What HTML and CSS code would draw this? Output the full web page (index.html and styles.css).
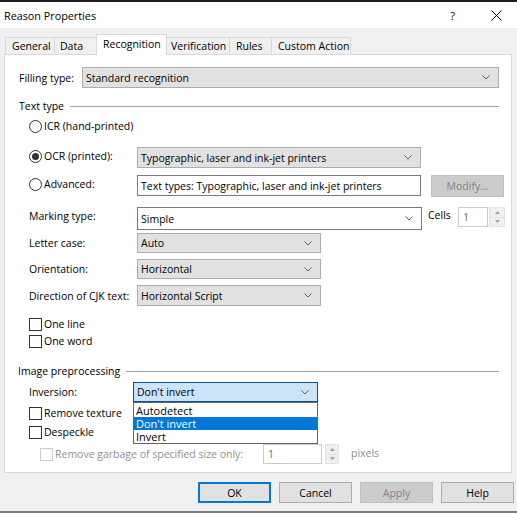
FILE: index.html
```html
<!DOCTYPE html>
<html>
<head>
<meta charset="utf-8">
<link rel="stylesheet" href="styles.css">
</head>
<body>
<div class="win">
  <div class="topstrip"></div>
  <div class="titlebar">
    <span class="title">Reason Properties</span>
    <span class="qmark">?</span>
    <svg class="close" width="11" height="11" viewBox="0 0 11 11"><path d="M0.5 0.5 L10.5 10.5 M10.5 0.5 L0.5 10.5" stroke="#000" stroke-width="1" fill="none"/></svg>
  </div>
  <div class="tabs">
    <div class="tab t-gen">General</div>
    <div class="tab t-data">Data</div>
    <div class="tab sel t-rec">Recognition</div>
    <div class="tab t-ver">Verification</div>
    <div class="tab t-rul">Rules</div>
    <div class="tab t-cus">Custom Action</div>
  </div>
  <div class="panel">
    <div class="row r-fill">
      <span class="lbl w-fill">Filling type:</span>
      <div class="combo grow"><span>Standard recognition</span><svg class="chev" width="8" height="5" viewBox="0 0 8 5"><polyline points="0.5,0.5 4,4 7.5,0.5" fill="none" stroke="#606060" stroke-width="1"/></svg></div>
    </div>
    <div class="row legend r-tt"><span>Text type</span><div class="gline"></div></div>
    <div class="row r-icr radrow">
      <span class="radio"></span><span>ICR (hand-printed)</span>
    </div>
    <div class="row r-ocr">
      <div class="radlbl"><span class="radio on"></span><span>OCR (printed):</span></div>
      <div class="combo w-ocr"><span>Typographic, laser and ink-jet printers</span><svg class="chev" width="8" height="5" viewBox="0 0 8 5"><polyline points="0.5,0.5 4,4 7.5,0.5" fill="none" stroke="#606060" stroke-width="1"/></svg></div>
    </div>
    <div class="row r-adv">
      <div class="radlbl"><span class="radio"></span><span>Advanced:</span></div>
      <div class="edit w-ocr">Text types: Typographic, laser and ink-jet printers</div>
      <div class="btn disabled modify">Modify...</div>
    </div>
    <div class="row r-mark">
      <span class="lbl2 top">Marking type:</span>
      <div class="combo white w-mark"><span>Simple</span><svg class="chev" width="8" height="5" viewBox="0 0 8 5"><polyline points="0.5,0.5 4,4 7.5,0.5" fill="none" stroke="#606060" stroke-width="1"/></svg></div>
      <span class="cells top">Cells</span>
      <div class="spinedit">1</div>
      <div class="spin"><div class="up"><svg width="5" height="3" viewBox="0 0 5 3"><polygon points="0,3 2.5,0 5,3" fill="#a0a0a0"/></svg></div><div class="dn"><svg width="5" height="3" viewBox="0 0 5 3"><polygon points="0,0 2.5,3 5,0" fill="#a0a0a0"/></svg></div></div>
    </div>
    <div class="row r-case">
      <span class="lbl2">Letter case:</span>
      <div class="combo w-short"><span>Auto</span><svg class="chev" width="8" height="5" viewBox="0 0 8 5"><polyline points="0.5,0.5 4,4 7.5,0.5" fill="none" stroke="#606060" stroke-width="1"/></svg></div>
    </div>
    <div class="row r-orient">
      <span class="lbl2">Orientation:</span>
      <div class="combo w-short"><span>Horizontal</span><svg class="chev" width="8" height="5" viewBox="0 0 8 5"><polyline points="0.5,0.5 4,4 7.5,0.5" fill="none" stroke="#606060" stroke-width="1"/></svg></div>
    </div>
    <div class="row r-cjk">
      <span class="lbl2">Direction of CJK text:</span>
      <div class="combo w-short"><span>Horizontal Script</span><svg class="chev" width="8" height="5" viewBox="0 0 8 5"><polyline points="0.5,0.5 4,4 7.5,0.5" fill="none" stroke="#606060" stroke-width="1"/></svg></div>
    </div>
    <div class="row r-line chkrow"><span class="chk"></span><span>One line</span></div>
    <div class="row r-word chkrow"><span class="chk"></span><span>One word</span></div>
    <div class="row legend r-ip"><span>Image preprocessing</span><div class="gline"></div></div>
    <div class="row r-inv">
      <span class="lbl3">Inversion:</span>
      <div class="invwrap">
        <div class="combo focus w-inv"><span>Don't invert</span><svg class="chev" width="8" height="5" viewBox="0 0 8 5"><polyline points="0.5,0.5 4,4 7.5,0.5" fill="none" stroke="#606060" stroke-width="1"/></svg></div>
        <div class="droplist">
          <div class="item">Autodetect</div>
          <div class="item hl">Don't invert</div>
          <div class="item">Invert</div>
        </div>
      </div>
    </div>
    <div class="row r-tex chkrow"><span class="chk"></span><span>Remove texture</span></div>
    <div class="row r-desp chkrow"><span class="chk"></span><span>Despeckle</span></div>
    <div class="row r-garb">
      <div class="garblbl"><span class="chk dis"></span><span class="distext">Remove garbage of specified size only:</span></div>
      <div class="spinedit garbedit">1</div>
      <div class="spin garbspin"><div class="up"><svg width="5" height="3" viewBox="0 0 5 3"><polygon points="0,3 2.5,0 5,3" fill="#a0a0a0"/></svg></div><div class="dn"><svg width="5" height="3" viewBox="0 0 5 3"><polygon points="0,0 2.5,3 5,0" fill="#a0a0a0"/></svg></div></div>
      <span class="distext pixels">pixels</span>
    </div>
  </div>
  <div class="buttons">
    <div class="btn default">OK</div>
    <div class="btn">Cancel</div>
    <div class="btn disabled">Apply</div>
    <div class="btn">Help</div>
  </div>
</div>
</body>
</html>
```
FILE: styles.css
```css
* { box-sizing: border-box; }
html, body { margin: 0; padding: 0; }
body {
  width: 517px;
  height: 513px;
  overflow: hidden;
  background: #f0f0f0;
  font-family: "Open Sans", "Liberation Sans", sans-serif;
  font-size: 10.5px;
  color: #000;
}
.win {
  width: 517px;
  height: 513px;
  display: flex;
  flex-direction: column;
  border-bottom: 2px solid #7d7d7d;
}
.topstrip { height: 2px; background: #1e1e1e; }
.titlebar {
  height: 26px;
  background: #fff;
  display: flex;
  align-items: center;
  padding-left: 4px;
}
.title { font-size: 10.8px; }
.qmark { margin-left: auto; font-size: 11px; margin-right: 36px; }
.close { margin-right: 15px; }
.tabs {
  height: 26px;
  display: flex;
  align-items: flex-end;
  padding-left: 5px;
  position: relative;
  z-index: 2;
}
.tab {
  height: 17px;
  border: 1px solid #d9d9d9;
  border-bottom: none;
  margin-left: -1px;
  padding: 0 0 0 6px;
  display: flex;
  align-items: center;
  background: #f0f0f0;
  flex-shrink: 0;
  white-space: nowrap;
}
.tab:first-child { margin-left: 0; }
.t-gen { width: 50px; }
.t-data { width: 43px; padding-left: 5px; }
.t-rec { width: 71px; }
.t-ver { width: 64px; padding-left: 4px; }
.t-rul { width: 43px; }
.t-cus { width: 80px; }
.tab.sel {
  height: 21px;
  margin-bottom: -1px;
  background: #fff;
  padding-bottom: 3px;
}
.panel {
  margin-left: 4px;
  width: 508px;
  height: 419px;
  background: #fff;
  border: 1px solid #d9d9d9;
  padding: 0 12px 0 14px;
  display: flex;
  flex-direction: column;
}
.row { display: flex; align-items: center; flex-shrink: 0; white-space: nowrap; }
.row > * { flex-shrink: 0; }
.row > .grow { flex: 1; flex-shrink: 1; }
.r-fill { margin-top: 12px; height: 21px; }
.w-fill { width: 63px; }
.combo {
  height: 100%;
  background: #e1e1e1;
  border: 1px solid #adadad;
  display: flex;
  align-items: center;
  justify-content: space-between;
  padding: 0 8px 0 3px;
}
.combo.white { background: #fff; border-color: #7a7a7a; }
.combo.focus { background: #cce4f7; border-color: #005499; }
.legend { height: 14px; }
.r-tt { margin-top: 11px; }
.row > .gline { flex: 1; flex-shrink: 1; height: 1px; background: #a0a0a0; margin-left: 6px; margin-top: 1px; }
.radio {
  width: 13px;
  height: 13px;
  border: 1px solid #333;
  border-radius: 50%;
  background: #fff;
  margin-right: 2px;
  flex-shrink: 0;
  display: flex;
  align-items: center;
  justify-content: center;
}
.radio.on::after {
  content: "";
  width: 7px;
  height: 7px;
  border-radius: 50%;
  background: #333;
}
.radrow { padding-left: 10px; }
.r-icr { margin-top: 6px; height: 14px; }
.r-ocr { margin-top: 14px; height: 21px; }
.radlbl { width: 118px; padding-left: 10px; display: flex; align-items: center; margin-top: -3px; }
.w-ocr { width: 284px; }
.r-adv { margin-top: 7px; height: 21px; }
.edit {
  height: 100%;
  border: 1px solid #7a7a7a;
  background: #fff;
  display: flex;
  align-items: center;
  padding-left: 3px;
}
.btn {
  width: 73px;
  height: 21px;
  background: #e1e1e1;
  border: 1px solid #adadad;
  display: flex;
  align-items: center;
  justify-content: center;
  flex-shrink: 0;
}
.btn.disabled { background: #cccccc; border-color: #bfbfbf; color: #838383; }
.btn.default { border: 2px solid #0078d7; }
.modify { margin-left: 10px; height: 22px; }
.r-mark { margin-top: 11px; height: 23px; align-items: flex-start; }
.lbl2 { width: 118px; padding-left: 10px; }
.lbl2.top { padding-top: 2px; }
.w-mark { width: 285px; }
.cells { margin-left: 6px; width: 30px; padding-top: 1px; }
.spinedit {
  width: 30px;
  height: 20px;
  border: 1px solid #cccccc;
  background: #fff;
  color: #6d6d6d;
  display: flex;
  align-items: center;
  padding-left: 4px;
}
.spin {
  width: 16px;
  height: 20px;
  margin-left: 1px;
  display: flex;
  flex-direction: column;
  background: #f0f0f0;
  border: 1px solid #e3e3e3;
}
.spin .up, .spin .dn {
  flex: 1;
  display: flex;
  align-items: center;
  justify-content: center;
}
.spin .up { border-bottom: 1px solid #e3e3e3; }
.w-short { width: 184px; }
.r-case { margin-top: 3px; height: 20px; }
.r-orient { margin-top: 6px; height: 20px; }
.r-cjk { margin-top: 6px; height: 21px; }
.chkrow { padding-left: 10px; height: 14px; }
.chk {
  width: 13px;
  height: 13px;
  border: 1px solid #333;
  background: #fff;
  margin-right: 2px;
  flex-shrink: 0;
}
.chk.dis { border-color: #cccccc; }
.r-line { margin-top: 11px; }
.r-word { margin-top: 3px; }
.r-ip { margin-top: 16px; margin-left: -1px; }
.r-inv { margin-top: 4px; height: 20px; position: relative; z-index: 3; }
.lbl3 { width: 114px; padding-left: 10px; }
.invwrap { position: relative; height: 100%; }
.w-inv { width: 185px; }
.droplist {
  position: absolute;
  left: 0;
  top: 20px;
  width: 185px;
  height: 42px;
  background: #fff;
  border: 1px solid #646464;
  padding: 1px 0;
}
.item { height: 13px; line-height: 13px; padding-left: 2px; font-size: 11px; overflow: hidden; }
.item.hl { background: #0078d7; color: #fff; }
.r-tex { margin-top: 4px; }
.r-desp { margin-top: 5px; }
.r-garb { margin-top: 5px; height: 20px; }
.garblbl { width: 244px; padding-left: 21px; display: flex; align-items: center; }
.distext { color: #8f8f8f; }
.garbedit { width: 59px; }
.garbspin { margin-left: 3px; width: 14px; }
.pixels { margin-left: 12px; margin-top: -2px; }
.buttons {
  display: flex;
  gap: 8px;
  padding-left: 198px;
  margin-top: 9px;
}
```
